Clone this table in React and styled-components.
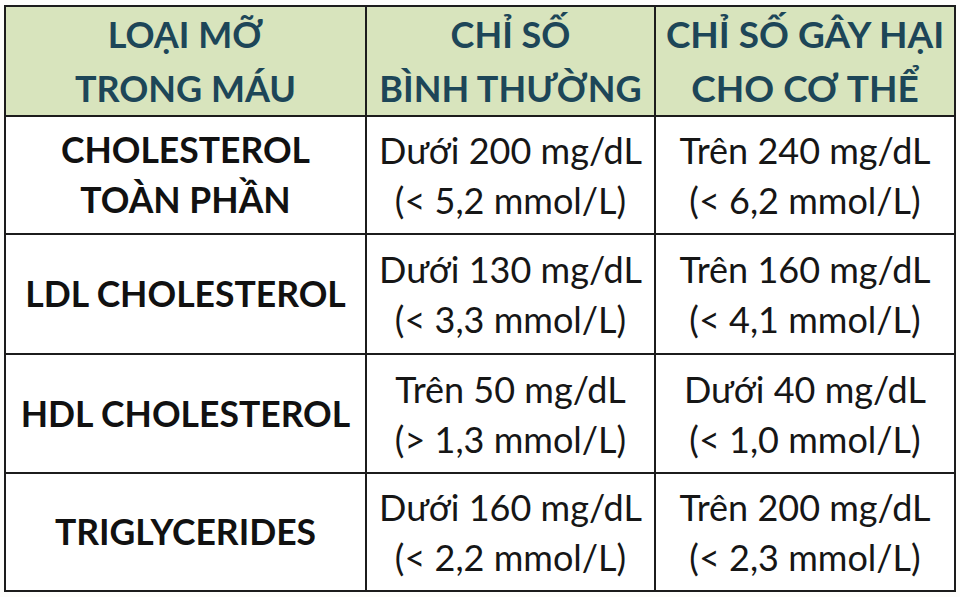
import React from 'react';
import styled, { createGlobalStyle } from 'styled-components';

const GlobalStyle = createGlobalStyle`
  html, body {
    margin: 0;
    padding: 0;
    background: #fdfdfb;
  }
  body {
    font-family: Lato, "Open Sans", "Liberation Sans", sans-serif;
  }
`;

const Page = styled.div`
  width: 960px;
  height: 597px;
  padding: 5px 0 0 4px;
  box-sizing: border-box;
`;

const Table = styled.table`
  width: 950px;
  border-collapse: collapse;
  table-layout: fixed;
  border: 2px solid #1c1c1c;
`;

const HeadCell = styled.th`
  height: 108px;
  padding: 0;
  background: #d8e4bd;
  color: #1d4658;
  font-size: ${(p) => p.$size || 36}px;
  font-weight: 700;
  line-height: 54px;
  text-align: center;
  vertical-align: middle;
  border: 2px solid #1c1c1c;
`;

const NameCell = styled.td`
  height: ${(p) => p.$h}px;
  padding: 0;
  color: #111;
  font-size: 35.5px;
  font-weight: 700;
  line-height: 50px;
  text-align: center;
  vertical-align: middle;
  border: 2px solid #1c1c1c;
  background: #fff;
`;

const ValueCell = styled(NameCell)`
  font-size: 36px;
  font-weight: 400;
  color: #161616;
`;

const rows = [
  { name: ['CHOLESTEROL', 'TOÀN PHẦN'], normal: ['Dưới 200 mg/dL', '(< 5,2 mmol/L)'], harm: ['Trên 240 mg/dL', '(< 6,2 mmol/L)'], h: 116 },
  { name: ['LDL CHOLESTEROL'], normal: ['Dưới 130 mg/dL', '(< 3,3 mmol/L)'], harm: ['Trên 160 mg/dL', '(< 4,1 mmol/L)'], h: 118 },
  { name: ['HDL CHOLESTEROL'], normal: ['Trên 50 mg/dL', '(> 1,3 mmol/L)'], harm: ['Dưới 40 mg/dL', '(< 1,0 mmol/L)'], h: 117 },
  { name: ['TRIGLYCERIDES'], normal: ['Dưới 160 mg/dL', '(< 2,2 mmol/L)'], harm: ['Trên 200 mg/dL', '(< 2,3 mmol/L)'], h: 116 },
];

function Lines({ items }) {
  return items.map((t, i) => (
    <React.Fragment key={i}>
      {i > 0 && <br />}
      {t}
    </React.Fragment>
  ));
}

export default function App() {
  return (
    <>
      <GlobalStyle />
      <Page>
        <Table>
          <colgroup>
            <col style={{ width: 361 }} />
            <col style={{ width: 289 }} />
            <col style={{ width: 300 }} />
          </colgroup>
          <thead>
            <tr>
              <HeadCell>LOẠI MỠ<br />TRONG MÁU</HeadCell>
              <HeadCell>CHỈ SỐ<br />BÌNH THƯỜNG</HeadCell>
              <HeadCell $size={37}>CHỈ SỐ GÂY HẠI<br />CHO CƠ THỂ</HeadCell>
            </tr>
          </thead>
          <tbody>
            {rows.map((r) => (
              <tr key={r.name.join(' ')}>
                <NameCell $h={r.h}><Lines items={r.name} /></NameCell>
                <ValueCell $h={r.h}><Lines items={r.normal} /></ValueCell>
                <ValueCell $h={r.h}><Lines items={r.harm} /></ValueCell>
              </tr>
            ))}
          </tbody>
        </Table>
      </Page>
    </>
  );
}
